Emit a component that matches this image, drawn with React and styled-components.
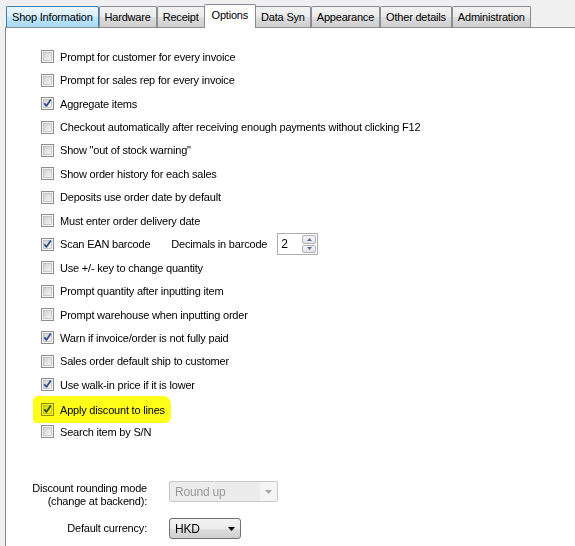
import React from 'react'
import styled, { createGlobalStyle } from 'styled-components'

const GlobalStyle = createGlobalStyle`
    body {
        margin: 0;
        background: #f0f0f0;
        font-family: "Liberation Sans", Arial, sans-serif;
        font-size: 11px;
        letter-spacing: -0.2px;
        color: #000;
    }
`

const Page = styled.div`
    width: 575px;
    height: 546px;
    overflow: hidden;
    display: flex;
    flex-direction: column;
`
const TabStrip = styled.div`
    display: flex;
    align-items: flex-end;
    height: 27px;
    padding-left: 6px;
    flex-shrink: 0;
`
const Tab = styled.div`
    position: relative;
    height: ${(p) => (p.$active ? '23px' : '20px')};
    line-height: ${(p) => (p.$active ? '21px' : '20px')};
    padding: 0 ${(p) => (p.$active ? '7px' : '5px')};
    margin: ${(p) => (p.$active ? '0 -1px -1px -1px' : '0')};
    border: 1px solid ${(p) => (p.$hover ? '#3c7fb1' : '#898c95')};
    border-bottom: none;
    border-radius: 2px 2px 0 0;
    z-index: ${(p) => (p.$active ? 2 : 1)};
    white-space: nowrap;
    background: ${(p) =>
        p.$active
            ? '#fff'
            : p.$hover
            ? 'linear-gradient(#eaf6fd, #d9f0fc 50%, #bee6fd 51%, #a7d9f5)'
            : 'linear-gradient(#f2f2f2, #ebebeb 50%, #dddddd 51%, #cfcfcf)'};
`
const Panel = styled.div`
    flex: 1;
    background: #fff;
    border-top: 1px solid #898c95;
    border-left: 1px solid #898c95;
    margin-left: 5px;
    padding: 17px 0 0 35px;
    position: relative;
    z-index: 1;
`
const List = styled.div`
    display: flex;
    flex-direction: column;
`
const Row = styled.div`
    display: flex;
    align-items: center;
    height: 23.45px;
`
const Marked = styled.div`
    display: flex;
    align-items: center;
    height: 27px;
    margin: ${(p) => (p.$on ? '-1px 0 -3px -8px' : '-2px 0')};
    padding: ${(p) => (p.$on ? '1px 6px 0 8px' : '0')};
    box-sizing: border-box;
    border-radius: 5px 8px 6px 4px;
    background: ${(p) => (p.$on ? '#ffff1a' : 'transparent')};
`
const Label = styled.label`
    display: flex;
    align-items: center;
    gap: 6px;
    white-space: nowrap;
`
const Box = styled.svg`
    width: 13px;
    height: 13px;
    flex-shrink: 0;
    mix-blend-mode: multiply;
`
const Side = styled.span`
    margin-left: 21px;
    margin-right: 10px;
`
const Spinner = styled.div`
    display: flex;
    width: 41px;
    height: 22px;
    box-sizing: border-box;
    border: 1px solid #abadb3;
    padding: 1px;
`
const SpinValue = styled.div`
    flex: 1;
    padding-left: 2px;
    font-size: 12px;
    line-height: 18px;
`
const SpinButtons = styled.div`
    width: 14px;
    display: flex;
    flex-direction: column;
    gap: 1px;
`
const SpinButton = styled.div`
    flex: 1;
    border: 1px solid #b5b5b5;
    border-radius: 2px;
    background: linear-gradient(#f5f5f5, #e2e2e2);
    display: flex;
    align-items: center;
    justify-content: center;
`
const Form = styled.div`
    display: grid;
    grid-template-columns: 135px auto;
    column-gap: 22px;
    row-gap: 10px;
    margin: 38px 0 0 -35px;
    padding-left: 6px;
    align-items: start;
`
const FormLabel = styled.div`
    display: flex;
    flex-direction: column;
    align-items: flex-end;
    padding-top: ${(p) => p.$top || '1px'};
    white-space: nowrap;
    line-height: 13px;
`
const Combo = styled.div`
    display: flex;
    align-items: center;
    justify-content: space-between;
    box-sizing: border-box;
    height: 21px;
    width: ${(p) => p.$w}px;
    padding: 0 5px;
    border: 1px solid ${(p) => (p.$disabled ? '#c9c9c9' : '#707070')};
    border-radius: ${(p) => (p.$disabled ? '2px' : '3px')};
    color: ${(p) => (p.$disabled ? '#9a9a9a' : '#000')};
    font-size: 12px;
    background: ${(p) =>
        p.$disabled
            ? 'linear-gradient(90deg, #ececec 90px, #f4f4f4 90px)'
            : 'linear-gradient(#f2f2f2, #ebebeb 50%, #dddddd 51%, #cfcfcf)'};
`

const CheckBox = ({ checked }) => (
    <Box viewBox="0 0 13 13">
        <defs>
            <linearGradient id="cbg" x1="0" y1="0" x2="1" y2="1">
                <stop offset="0" stopColor="#cfcfcf" />
                <stop offset="1" stopColor="#f8f8f8" />
            </linearGradient>
        </defs>
        <rect x="0.5" y="0.5" width="12" height="12" fill="#f4f4f4" stroke="#8f8f8f" />
        <rect x="2.5" y="2.5" width="8" height="8" fill="url(#cbg)" stroke="#b0b0b0" strokeWidth="0.6" />
        {checked && (
            <path d="M3.3 6.3 L5.4 8.9 L9.8 2.6" fill="none" stroke="#2f4a8a" strokeWidth="1.7" strokeLinejoin="round" />
        )}
    </Box>
)

const Arrow = ({ color }) => (
    <svg width="7" height="4" viewBox="0 0 7 4">
        <path d="M0 0 L7 0 L3.5 4 Z" fill={color} />
    </svg>
)

const tabs = ['Shop Information', 'Hardware', 'Receipt', 'Options', 'Data Syn', 'Appearance', 'Other details', 'Administration']

const options = [
    ['Prompt for customer for every invoice', false],
    ['Prompt for sales rep for every invoice', false],
    ['Aggregate items', true],
    ['Checkout automatically after receiving enough payments without clicking F12', false],
    ['Show "out of stock warning"', false],
    ['Show order history for each sales', false],
    ['Deposits use order date by default', false],
    ['Must enter order delivery date', false],
    ['Scan EAN barcode', true, 'spin'],
    ['Use +/- key to change quantity', false],
    ['Prompt quantity after inputting item', false],
    ['Prompt warehouse when inputting order', false],
    ['Warn if invoice/order is not fully paid', true],
    ['Sales order default ship to customer', false],
    ['Use walk-in price if it is lower', true],
    ['Apply discount to lines', true, 'mark'],
    ['Search item by S/N', false],
]

const App = () => {
    return (
        <Page>
            <GlobalStyle />
            <TabStrip>
                {tabs.map((t, i) => (
                    <Tab key={t} $active={t === 'Options'} $hover={i === 0}>
                        {t}
                    </Tab>
                ))}
            </TabStrip>
            <Panel>
                <List>
                    {options.map(([text, checked, extra]) => (
                        <Row key={text}>
                            <Marked $on={extra === 'mark'}>
                                <Label>
                                    <CheckBox checked={checked} />
                                    {text}
                                </Label>
                            </Marked>
                            {extra === 'spin' && (
                                <>
                                    <Side>Decimals in barcode</Side>
                                    <Spinner>
                                        <SpinValue>2</SpinValue>
                                        <SpinButtons>
                                            <SpinButton>
                                                <svg width="5" height="3" viewBox="0 0 5 3"><path d="M0 3 L5 3 L2.5 0 Z" fill="#4b6ea0" /></svg>
                                            </SpinButton>
                                            <SpinButton>
                                                <svg width="5" height="3" viewBox="0 0 5 3"><path d="M0 0 L5 0 L2.5 3 Z" fill="#4b6ea0" /></svg>
                                            </SpinButton>
                                        </SpinButtons>
                                    </Spinner>
                                </>
                            )}
                        </Row>
                    ))}
                </List>
                <Form>
                    <FormLabel $top="1px">
                        <span>Discount rounding mode</span>
                        <span>(change at backend):</span>
                    </FormLabel>
                    <Combo $w={109} $disabled>
                        Round up
                        <Arrow color="#a6a6a6" />
                    </Combo>
                    <FormLabel $top="4px">
                        <span>Default currency:</span>
                    </FormLabel>
                    <Combo $w={72}>
                        HKD
                        <Arrow color="#000" />
                    </Combo>
                </Form>
            </Panel>
        </Page>
    )
}

export default App
